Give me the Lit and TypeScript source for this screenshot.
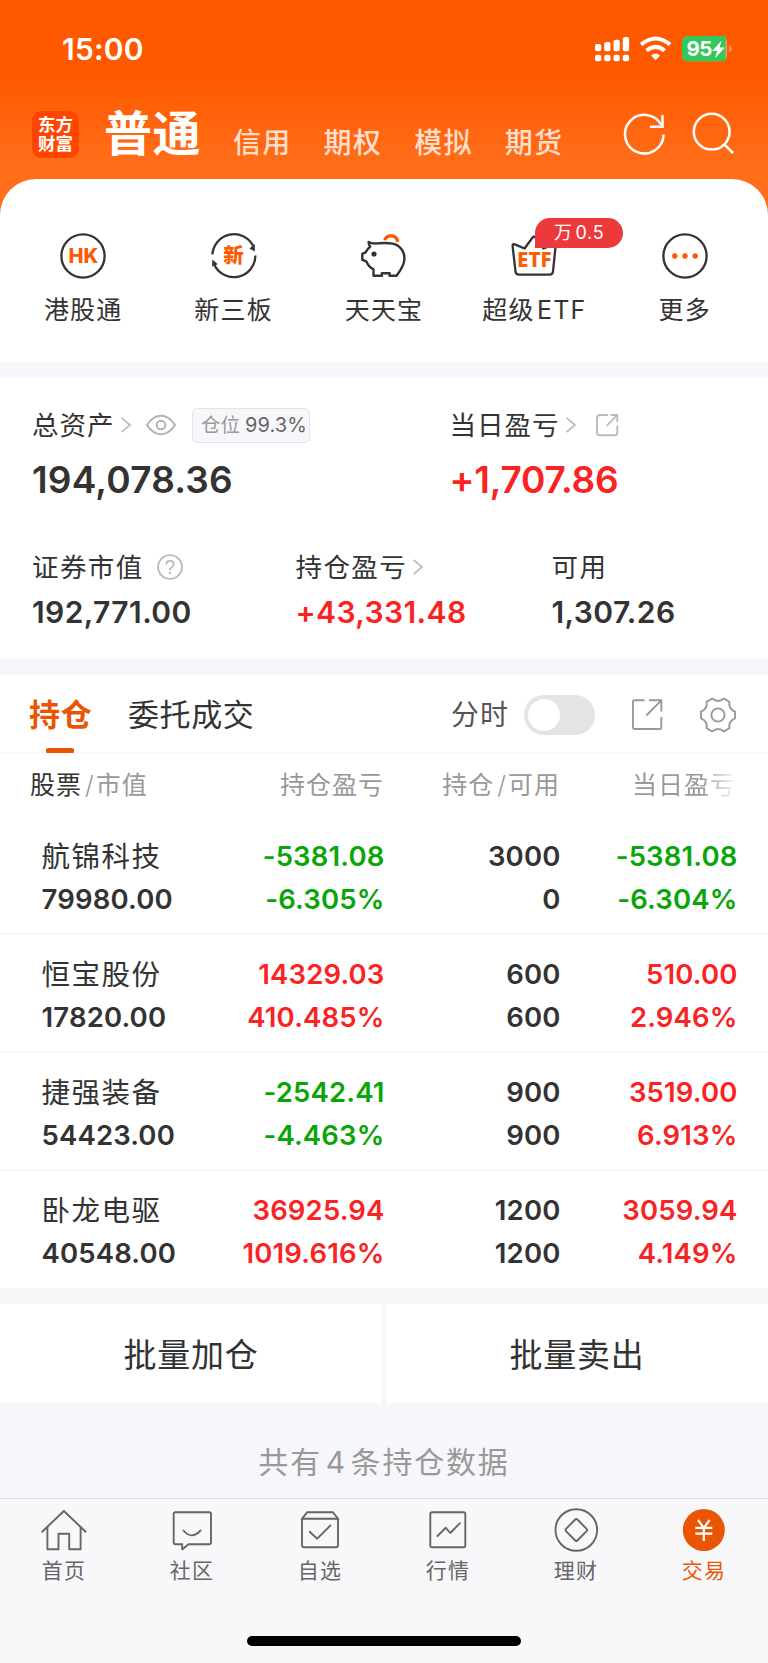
import { LitElement, html, css, svg, nothing } from "lit";
import { customElement } from "lit/decorators.js";
import { classMap } from "lit/directives/class-map.js";

interface Holding {
  name: string;
  value: string;
  profit: string;
  profitRate: string;
  amount: string;
  usable: string;
  day: string;
  dayRate: string;
}

const HOLDINGS: Holding[] = [
  { name: "航锦科技", value: "79980.00", profit: "-5381.08", profitRate: "-6.305%", amount: "3000", usable: "0", day: "-5381.08", dayRate: "-6.304%" },
  { name: "恒宝股份", value: "17820.00", profit: "14329.03", profitRate: "410.485%", amount: "600", usable: "600", day: "510.00", dayRate: "2.946%" },
  { name: "捷强装备", value: "54423.00", profit: "-2542.41", profitRate: "-4.463%", amount: "900", usable: "900", day: "3519.00", dayRate: "6.913%" },
  { name: "卧龙电驱", value: "40548.00", profit: "36925.94", profitRate: "1019.616%", amount: "1200", usable: "1200", day: "3059.94", dayRate: "4.149%" },
];

const QUICK = [
  {
    label: "港股通",
    icon: svg`<circle cx="25" cy="25" r="21.6" fill="none" stroke="#333" stroke-width="2.3"/>
      <text x="25.3" y="32" class="t-hk">HK</text>`,
  },
  {
    label: "新三板",
    icon: svg`<g fill="none" stroke="#333" stroke-width="2.3">
        <path d="M3.4 23.5A21.6 21.6 0 0 1 44.2 15"/><path d="M46.4 24.5A21.6 21.6 0 0 1 5.4 34"/></g>
      <path fill="#333" d="M45.8 13V20.4L40.4 17.6ZM3.4 28.6L8.8 33.2L3 35.4Z"/>
      <text x="24.6" y="32.2" class="t-new">新</text>`,
  },
  {
    label: "天天宝",
    icon: svg`<path d="M25.6 9.2A6.8 6.8 0 0 1 38.7 11" fill="none" stroke="#ff5a00" stroke-width="3.2"/>
      <path d="M9.6 11C13.3 13.2 16.8 12.5 20.3 12.2C28.3 11.6 34.3 11.6 38.6 14.6C43.8 18.3 45.8 23.5 45.3 29C44.9 35 41.3 39.5 37.5 44.8H30.6V42.2H22.9V44.8H14.5V38.4C10.9 36.6 8.8 33.7 7.5 30.7L3.3 28.7V22.9L6.7 21.3C7.8 18.7 9.1 17.2 11.2 15.7C10 14.2 9.6 12.8 9.6 11Z" fill="none" stroke="#333" stroke-width="2.4" stroke-linejoin="round"/>
      <circle cx="15" cy="23" r="2.6" fill="#333"/>`,
  },
  {
    label: "超级 ETF",
    badge: "万 0.5",
    icon: svg`<path d="M3.6 15C3.4 13.3 4.6 12.8 5.8 13.4L15.6 17.5L23.6 6.5Q25 4.8 26.4 6.5L34.4 17.5L44.6 13.4C46 12.9 46.8 13.6 46.6 15L44 40.5Q43.7 43.7 40.5 43.7H10Q6.8 43.7 6.5 40.5Z" fill="none" stroke="#333" stroke-width="2.3" stroke-linejoin="round"/>
      <text x="25.3" y="36.4" class="t-etf">ETF</text>`,
  },
  {
    label: "更多",
    icon: svg`<circle cx="25" cy="25" r="21.6" fill="none" stroke="#333" stroke-width="2.3"/>
      <g fill="#ff5a00"><circle cx="14.8" cy="25" r="2.7"/><circle cx="25" cy="25" r="2.7"/><circle cx="35.2" cy="25" r="2.7"/></g>`,
  },
];

const NAV = [
  { label: "首页", icon: svg`<path d="M2.2 23.7L23.9 3L45.6 23.7"/><path d="M7.4 19.5V41.3H18.5V25.7H29.2V41.3H40.6V19.5"/>` },
  { label: "社区", icon: svg`<path d="M7.5 4.2H41.3Q43 4.2 43 6V34.4Q43 36.2 41.3 36.2H20.5L14.2 41.5V36.2H7.5Q5.7 36.2 5.7 34.4V6Q5.7 4.2 7.5 4.2Z"/><path d="M15.5 22.5Q23.5 32.2 32.5 22.5"/>` },
  { label: "自选", icon: svg`<path d="M6 10.8L11.2 4.2H37L42 10.8V37Q42 39.3 39.7 39.3H8.3Q6 39.3 6 37Z"/><path d="M6 10.8H42"/><path d="M13.7 23.8L21.2 30.7L34.5 17.4"/>` },
  { label: "行情", icon: svg`<rect x="6.3" y="4.2" width="35" height="35" rx="1.8"/><path d="M13.5 28L21.8 19.8L26.3 25L35.8 15.3"/>` },
  { label: "理财", icon: svg`<circle cx="24.3" cy="22" r="20.8"/><path d="M23.2 11.5Q24.3 10.4 25.4 11.5L34.6 20.9Q35.6 22 34.6 23.1L25.4 32.5Q24.3 33.6 23.2 32.5L14 23.1Q13 22 14 20.9Z"/>` },
  { label: "交易", on: true, icon: svg`<circle cx="23.8" cy="22" r="21" fill="#ea5504" stroke="none"/><path stroke="#fff" stroke-width="2.2" stroke-linecap="butt" d="M18 12L23.8 20L29.6 12M23.8 20V33M15.3 19.8H32.3M15.3 25.6H32.3"/>` },
];

const chevron = html`<svg class="chev" width="12" height="18" viewBox="0 0 12 18"><path d="M1.5 1.8L10 9L1.5 16.2" fill="none" stroke="#bbb" stroke-width="1.7"/></svg>`;

const tone = (v: string) => classMap({ down: v.startsWith("-"), up: !v.startsWith("-") });

@customElement("app-root")
export class AppRoot extends LitElement {
  static styles = css`
    :host {
      display: block;
      width: 768px;
      height: 1663px;
      overflow: hidden;
      background: linear-gradient(#ff5900 0, #ff5900 75px, #ff6d18 160px, #ff701c 225px);
      font-family: Inter, "Noto Sans CJK SC", sans-serif;
      color: #333;
      white-space: nowrap;
    }
    * { box-sizing: border-box; }
    svg { display: block; flex: none; overflow: visible; }
    .page { display: flex; flex-direction: column; height: 1663px; }

    .status { height: 98px; display: flex; justify-content: space-between; padding: 34px 36px 0 62px; color: #fff; }
    .time { font-size: 30px; line-height: 30px; font-weight: 600; letter-spacing: 0.2px; }
    .t-bat { font: 700 20.5px Inter, sans-serif; fill: #fff; letter-spacing: -0.4px; }

    .top { height: 81px; display: flex; align-items: flex-start; padding: 0 0 0 32px; color: #fff; }
    .logo { width: 47px; height: 47px; margin-top: 12.5px; border-radius: 9px; background: #ff4500; display: grid; align-content: center; justify-content: center; font-size: 17.5px; line-height: 19.5px; font-weight: 700; }
    .title { font-size: 48px; line-height: 48px; font-weight: 700; margin: 12px 0 0 25px; letter-spacing: 0.6px; width: 129px; }
    .kinds { display: flex; margin-top: 30.5px; font-size: 28px; line-height: 28px; font-weight: 500; letter-spacing: 1.2px; color: rgba(255, 255, 255, 0.8); }
    .kinds span { width: 90.6px; }
    .tools { margin: 12px 0 0 27px; }

    .quick { height: 183px; display: grid; grid-template-columns: repeat(5, 1fr); padding: 51.5px 8px 0; background: #fff; border-radius: 36px 36px 0 0; }
    .q { position: relative; display: flex; flex-direction: column; align-items: center; }
    .q span { font-size: 25px; line-height: 30px; letter-spacing: 1.2px; word-spacing: -6px; margin: 14.5px 0 0 0; }
    .badge { position: absolute; left: 76px; top: -12.5px; width: 88px; height: 30px; border-radius: 15px 15px 15px 0; background: #ec3a3c; color: #fff; font-size: 18px; line-height: 30px; text-align: center; letter-spacing: 0.7px; word-spacing: -3px; }
    .t-hk, .t-new, .t-etf { fill: #ff5a00; text-anchor: middle; font-family: Inter, "Noto Sans CJK SC", sans-serif; font-weight: 800; }
    .t-hk { font-size: 20px; }
    .t-new { font-size: 20.5px; }
    .t-etf { font-family: "Noto Sans", sans-serif; font-size: 20.5px; font-weight: 800; }

    .gap { flex: none; height: 16px; background: #f6f7fa; }
    .assets { height: 281px; background: #fff; padding: 28px 0 0 32px; }
    .two { display: grid; grid-template-columns: 417.5px 1fr; }
    .three { display: grid; grid-template-columns: 263.5px 256px 1fr; margin-top: 48.5px; }
    .lab { display: flex; align-items: center; height: 38px; font-size: 26.5px; letter-spacing: 1px; line-height: 38px; }
    .three .lab { letter-spacing: 1.4px; }
    .chev { margin-left: 5px; }
    .eye { margin-left: 13.5px; }
    .tag { margin-left: 15px; height: 35px; width: 118px; border: 1px solid #e3e4e8; border-radius: 5px; background: #f6f7fa; color: #666; font-size: 20px; line-height: 33px; padding-left: 8px; letter-spacing: 0.1px; word-spacing: -1px; }
    .tag i { font-style: normal; color: #999; font-size: 19.5px; }
    .big { font-size: 37px; line-height: 40px; font-weight: 600; margin-top: 15.5px; letter-spacing: 0.2px; }
    .big.red { letter-spacing: -0.2px; }
    .mid { font-size: 30px; line-height: 34px; font-weight: 600; margin-top: 8.5px; letter-spacing: 0.4px; }
    .red, .up { color: #fa2323; }
    .down { color: #09a509; }
    .share { margin-left: 18px; }
    .help { margin-left: 13px; }

    .tabs { height: 79px; background: #fff; border-bottom: 2px solid #f6f7f9; display: flex; align-items: flex-start; padding: 20px 0 0 29px; }
    .tab { height: 59px; font-size: 31px; line-height: 39px; letter-spacing: 0.8px; display: flex; flex-direction: column; width: 99px; }
    .tab.on { color: #ea5504; font-weight: 700; }
    .tab.on::after { content: ""; width: 28px; height: 5px; border-radius: 2px 2px 1px 1px; background: #ea5504; margin: 14px 0 0 17px; }
    .tab.two-w { width: 323px; letter-spacing: 0.6px; }
    .fen { color: #555; font-size: 28px; line-height: 40px; letter-spacing: 1px; width: 72.5px; }
    .switch { width: 71px; height: 40px; margin-top: -0.5px; border-radius: 20px; background: #e4e4e6; padding: 4px; }
    .switch::after { content: ""; display: block; width: 32px; height: 32px; border-radius: 50%; background: #fff; }
    .ext { margin: 3px 0 0 36px; }
    .gear { margin: 1.5px 0 0 37.5px; }

    .cols { display: grid; grid-template-columns: 160px 183px 176px 177px; align-content: start; }
    .cols > * { text-align: right; }
    .cols > :nth-child(4n + 1) { text-align: left; }
    .head { height: 63px; padding-left: 30px; background: #fff; color: #999; font-size: 25px; line-height: 63px; letter-spacing: 1px; grid-template-columns: 171px 183px 176px 176px; }
    .head b { color: #333; font-weight: 400; }
    .head i { font-style: normal; font-weight: 300; letter-spacing: 2px; margin-left: 3px; }
    .fade { -webkit-mask-image: linear-gradient(90deg, #000 142px, transparent 178px); mask-image: linear-gradient(90deg, #000 142px, transparent 178px); }
    .row { height: 118px; padding: 18px 0 0 41.5px; background: #fff; border-bottom: 2px solid #f8f8fa; font-size: 27.5px; line-height: 43px; font-weight: 600; letter-spacing: 0.15px; }
    .row.last { height: 117px; border-bottom: 0; }
    .row .name { font-size: 28.5px; font-weight: 400; letter-spacing: 1.5px; }

    .batch { flex: none; display: grid; grid-template-columns: 1fr 1fr; gap: 4px; background: #f6f7fa; height: 99px; font-size: 33px; line-height: 102px; letter-spacing: 0.8px; text-align: center; }
    .batch div { background: #fff; }
    .foot { flex: none; height: 95px; background: #f6f7fa; color: #999; font-size: 30px; line-height: 118px; text-align: center; letter-spacing: 1.8px; word-spacing: -6.5px; }

    .nav { height: 165px; flex: none; background: #f8f8fb; border-top: 1px solid #dedfe2; display: grid; grid-template-columns: repeat(6, 128px); grid-template-rows: 137px 11px; }
    .n { display: flex; flex-direction: column; align-items: center; padding-top: 9px; font-size: 21px; line-height: 28px; letter-spacing: 1.2px; color: #666; }
    .n svg { fill: none; stroke: #666; stroke-width: 1.9; stroke-linejoin: round; stroke-linecap: round; margin-right: 2px; }
    .n span { margin-top: 5px; }
    .n.on { color: #ea5504; }
    .bar { grid-column: 1 / -1; justify-self: center; width: 274px; height: 10px; border-radius: 5px; background: #000; }
  `;

  render() {
    return html`
      <div class="page">
        <div class="status">
          <div class="time">15:00</div>
          <svg width="138" height="30" viewBox="594 34 138 30">
            <g fill="#fff">
              <rect x="595" y="44" width="6.3" height="7.3" rx="2"/><rect x="604.2" y="42" width="6.3" height="9.3" rx="2"/>
              <rect x="613.5" y="39.7" width="6.3" height="11.6" rx="2"/><rect x="622.8" y="37" width="6.3" height="14.3" rx="2"/>
              <rect x="595" y="54.8" width="6.3" height="6.4" rx="2"/><rect x="604.2" y="54.8" width="6.3" height="6.4" rx="2"/>
              <rect x="613.5" y="54.8" width="6.3" height="6.4" rx="2"/><rect x="622.8" y="54.8" width="6.3" height="6.4" rx="2"/>
              <path d="M655.6 60.2L651.2 55.6Q655.6 51.4 660 55.6Z"/>
            </g>
            <g fill="none" stroke="#fff" stroke-width="4">
              <path d="M641.2 44.6Q655.6 32.4 670 44.6"/><path d="M646.6 50.8Q655.6 43 664.6 50.8"/>
            </g>
            <rect x="682" y="36" width="45" height="25.3" rx="6" fill="#ff9a66"/>
            <path d="M688 36H725.6V61.3H688Q682 61.3 682 55.3V42Q682 36 688 36Z" fill="#34c759"/>
            <path d="M729 45Q731.6 46 731.6 48.8Q731.6 51.6 729 52.6Z" fill="#ff9a66"/>
            <text x="686.4" y="56.2" class="t-bat">95</text>
            <path d="M721.6 40.6L712.2 51H717.2L715 58.2L724.8 47.4H719.6Z" fill="#fff"/>
          </svg>
        </div>
        <div class="top">
          <div class="logo"><span>东方</span><span>财富</span></div>
          <div class="title">普通</div>
          <div class="kinds"><span>信用</span><span>期权</span><span>模拟</span><span>期货</span></div>
          <svg class="tools" width="112" height="48" viewBox="622 110 112 48" fill="none" stroke="#fff" stroke-width="2.5">
            <path d="M663.6 134.5A19.3 19.3 0 1 1 661.3 125"/>
            <path d="M662.5 115V126.8H650"/>
            <circle cx="711.7" cy="131.7" r="17.9"/><path d="M724 144.2L733 153"/>
          </svg>
        </div>

        <div class="quick">
          ${QUICK.map((q) => html`
            <div class="q">
              <svg width="50" height="50" viewBox="0 0 50 50">${q.icon}</svg>
              <span>${q.label}</span>
              ${q.badge ? html`<div class="badge">${q.badge}</div>` : nothing}
            </div>`)}
        </div>
        <div class="gap"></div>

        <div class="assets">
          <div class="two">
            <div>
              <div class="lab">总资产${chevron}
                <svg class="eye" width="32" height="22" viewBox="0 0 32 22" fill="none" stroke="#b3b3b3" stroke-width="2">
                  <path d="M2 11Q8 1.8 16 1.8T30 11Q24 20.2 16 20.2T2 11Z"/><circle cx="16" cy="11" r="4.3"/>
                </svg>
                <div class="tag"><i>仓位</i> 99.3%</div>
              </div>
              <div class="big">194,078.36</div>
            </div>
            <div>
              <div class="lab">当日盈亏${chevron}
                <svg class="share" width="24" height="24" viewBox="0 0 24 24" fill="none" stroke="#bbb" stroke-width="1.9">
                  <path d="M12.8 2H5Q2 2 2 5V19.5Q2 22.3 5 22.3H19.4Q22.3 22.3 22.3 19.5V12.5"/><path d="M15.5 2H22.3V9M22 2.3L11.6 12.8"/>
                </svg>
              </div>
              <div class="big red">+1,707.86</div>
            </div>
          </div>
          <div class="three">
            <div>
              <div class="lab">证券市值
                <svg class="help" width="26" height="26" viewBox="0 0 26 26" fill="none" stroke="#bbb" stroke-width="1.9">
                  <circle cx="13" cy="13" r="11.9"/><path d="M9.4 10.4Q9.4 6.9 13 6.9T16.6 10.2Q16.6 11.9 14.7 13.2T13 16.4"/><path d="M13 17.8V20"/>
                </svg>
              </div>
              <div class="mid">192,771.00</div>
            </div>
            <div><div class="lab">持仓盈亏${chevron}</div><div class="mid red">+43,331.48</div></div>
            <div><div class="lab">可用</div><div class="mid">1,307.26</div></div>
          </div>
        </div>
        <div class="gap"></div>

        <div class="tabs">
          <div class="tab on">持仓</div>
          <div class="tab two-w">委托成交</div>
          <div class="fen">分时</div>
          <div class="switch"></div>
          <svg class="ext" width="32" height="32" viewBox="0 0 32 32" fill="none" stroke="#999" stroke-width="1.9">
            <path d="M13.5 2.3H3.5Q2 2.3 2 3.8V29.5Q2 31 3.5 31H29.3Q30.3 31 30.3 29.5V19"/><path d="M18 2.3H30.3V13.5M29.8 2.8L15.3 17.5"/>
          </svg>
          <svg class="gear" width="36" height="36" viewBox="0 0 36 36" fill="none" stroke="#999" stroke-width="1.9" stroke-linejoin="round">
            <path d="M12.1 1.6Q18 6.3 23.9 1.6L29.4 4.8Q28.2 11.6 35 14.6V21.4Q28.2 24.4 29.4 31.2L23.9 34.4Q18 29.7 12.1 34.4L6.6 31.2Q7.8 24.4 1 21.4V14.6Q7.8 11.6 6.6 4.8Z"/><circle cx="18" cy="18" r="6.6"/>
          </svg>
        </div>

        <div class="cols head">
          <div><b>股票</b><i>/</i>市值</div><div>持仓盈亏</div><div>持仓<i>/</i>可用</div><div class="fade">当日盈亏</div>
        </div>
        ${HOLDINGS.map((h, i) => html`
          <div class="cols row ${i === HOLDINGS.length - 1 ? "last" : ""}">
            <div class="name">${h.name}</div><div class=${tone(h.profit)}>${h.profit}</div><div>${h.amount}</div><div class=${tone(h.day)}>${h.day}</div>
            <div>${h.value}</div><div class=${tone(h.profitRate)}>${h.profitRate}</div><div>${h.usable}</div><div class=${tone(h.dayRate)}>${h.dayRate}</div>
          </div>`)}
        <div class="gap"></div>
        <div class="batch"><div>批量加仓</div><div>批量卖出</div></div>
        <div class="foot">共有 4 条持仓数据</div>

        <div class="nav">
          ${NAV.map((n) => html`
            <div class="n ${n.on ? "on" : ""}">
              <svg width="47" height="44" viewBox="0 0 47 44">${n.icon}</svg>
              <span>${n.label}</span>
            </div>`)}
          <div class="bar"></div>
        </div>
      </div>
    `;
  }
}
